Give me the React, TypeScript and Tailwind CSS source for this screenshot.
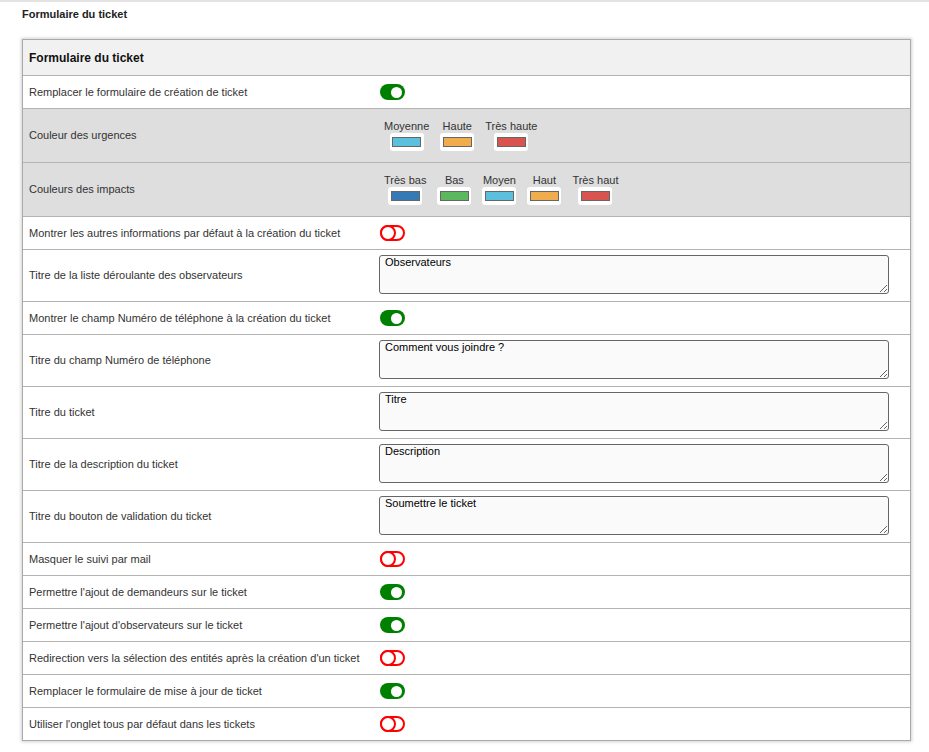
import React from "react";

const font = { fontFamily: '"Liberation Sans", Arial, sans-serif' };

function Toggle({ on }: { on: boolean }) {
  if (on) {
    return (
      <div className="relative w-[25px] h-[16px] rounded-full bg-[#008000]">
        <div className="absolute right-[3px] top-[2.5px] w-[11px] h-[11px] rounded-full bg-white" />
      </div>
    );
  }
  return (
    <div className="relative w-[25px] h-[16px] rounded-full border-[2.5px] border-[#ff0000] bg-white">
      <div className="absolute left-[-2.5px] top-[-2.5px] w-[16px] h-[16px] rounded-full border-[2.5px] border-[#ff0000] bg-white" />
    </div>
  );
}

function Swatch({ label, color }: { label: string; color: string }) {
  return (
    <div className="flex flex-col items-center">
      <div className="text-[11px] leading-[13px] text-[#333]">{label}</div>
      <div className="w-[34px] h-[18px] bg-white rounded-[3px] flex items-center justify-center">
        <div className="w-[29px] h-[10px] border border-[#666]" style={{ backgroundColor: color }} />
      </div>
    </div>
  );
}

function Row({
  label,
  children,
  h,
  gray,
}: {
  label: string;
  children: React.ReactNode;
  h: string;
  gray?: boolean;
}) {
  return (
    <div className={`grid grid-cols-[350px_1fr] border-b border-[#b3b3b3] ${h} ${gray ? "bg-[#dedede]" : "bg-white"}`}>
      <div className="flex items-center pl-[6px] text-[11px] text-[#333]">{label}</div>
      <div className="flex items-center pl-[6px]">{children}</div>
    </div>
  );
}

function ToggleRow({ label, on }: { label: string; on: boolean }) {
  return (
    <Row label={label} h="h-[33px]">
      <div className="pl-[1px]">
        <Toggle on={on} />
      </div>
    </Row>
  );
}

function TextRow({ label, value }: { label: string; value: string }) {
  return (
    <Row label={label} h="h-[52px]">
      <textarea
        readOnly
        defaultValue={value}
        className="w-[510px] h-[39px] mt-[-2px] bg-[#fafafa] border border-[#666] rounded-[3px] px-[5px] pt-0 text-[11px] leading-[13px] text-black outline-none"
        style={font}
      />
    </Row>
  );
}

export default function App() {
  return (
    <div className="min-h-[752px] bg-white border-t-2 border-[#e3e3e3]" style={font}>
      <div className="pl-[22px] pt-[6px] text-[11px] leading-[13px] font-bold text-[#222]">Formulaire du ticket</div>
      <div className="ml-[22px] mt-[18px] w-[889px] border border-[#aaa] shadow-[0_0_3px_1px_rgba(0,0,0,0.18)]">
        <div className="h-[36px] bg-[#f1f1f1] border-b border-[#b3b3b3] flex items-center pl-[6px] text-[12px] font-bold text-[#111]">
          Formulaire du ticket
        </div>
        <ToggleRow label="Remplacer le formulaire de création de ticket" on={true} />
        <Row label="Couleur des urgences" h="h-[54px]" gray>
          <div className="flex gap-[11px] pl-[5px]">
            <Swatch label="Moyenne" color="#5bc0de" />
            <Swatch label="Haute" color="#f0ad4e" />
            <Swatch label="Très haute" color="#d9534f" />
          </div>
        </Row>
        <Row label="Couleurs des impacts" h="h-[54px]" gray>
          <div className="flex gap-[11px] pl-[5px]">
            <Swatch label="Très bas" color="#337ab7" />
            <Swatch label="Bas" color="#5cb85c" />
            <Swatch label="Moyen" color="#5bc0de" />
            <Swatch label="Haut" color="#f0ad4e" />
            <Swatch label="Très haut" color="#d9534f" />
          </div>
        </Row>
        <ToggleRow label="Montrer les autres informations par défaut à la création du ticket" on={false} />
        <TextRow label="Titre de la liste déroulante des observateurs" value="Observateurs" />
        <ToggleRow label="Montrer le champ Numéro de téléphone à la création du ticket" on={true} />
        <TextRow label="Titre du champ Numéro de téléphone" value="Comment vous joindre ?" />
        <TextRow label="Titre du ticket" value="Titre" />
        <TextRow label="Titre de la description du ticket" value="Description" />
        <TextRow label="Titre du bouton de validation du ticket" value="Soumettre le ticket" />
        <ToggleRow label="Masquer le suivi par mail" on={false} />
        <ToggleRow label="Permettre l'ajout de demandeurs sur le ticket" on={true} />
        <ToggleRow label="Permettre l'ajout d'observateurs sur le ticket" on={true} />
        <ToggleRow label="Redirection vers la sélection des entités après la création d'un ticket" on={false} />
        <ToggleRow label="Remplacer le formulaire de mise à jour de ticket" on={true} />
        <div className="grid grid-cols-[350px_1fr] h-[32px] bg-white">
          <div className="flex items-center pl-[6px] text-[11px] text-[#333]">Utiliser l'onglet tous par défaut dans les tickets</div>
          <div className="flex items-center pl-[7px]">
            <Toggle on={false} />
          </div>
        </div>
      </div>
    </div>
  );
}
